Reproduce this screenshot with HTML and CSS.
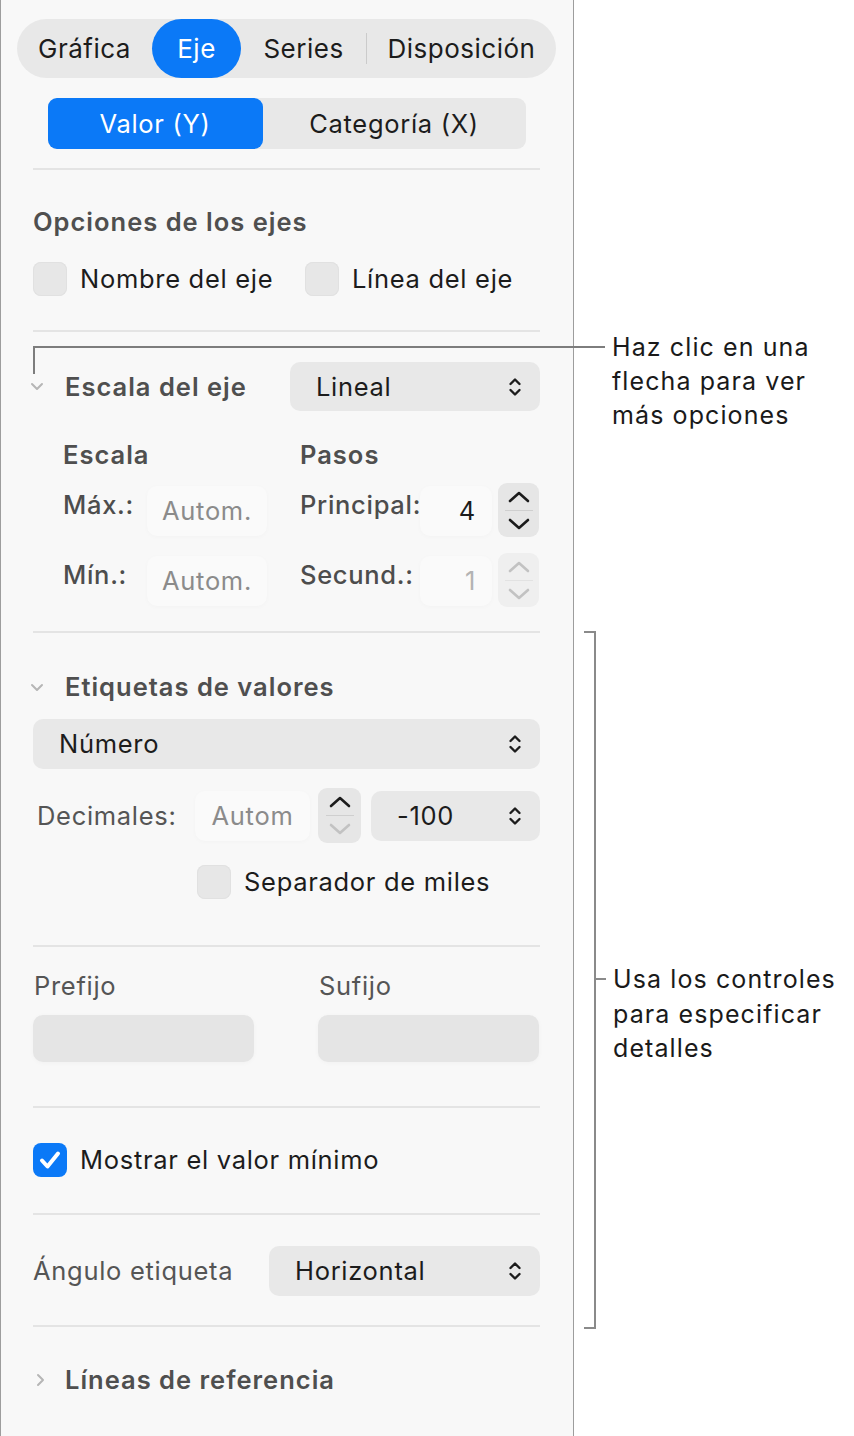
FILE: index.html
```html
<!DOCTYPE html>
<html lang="es">
  <head>
    <meta charset="UTF-8" />
    <meta name="viewport" content="width=device-width, initial-scale=1.0" />
    <title>Eje – Inspector de gráficas</title>
    <link rel="stylesheet" href="styles.css">
  </head>
  <body>
    <div class="page">
      <aside class="inspector">
        <!-- pestañas superiores del inspector -->
        <nav class="tabs">
          <span class="tab tab-chart">Gráfica</span>
          <span class="tab tab-axis is-active">Eje</span>
          <span class="tab tab-series">Series</span>
          <span class="tab-sep"></span>
          <span class="tab tab-layout">Disposición</span>
        </nav>

        <div class="content">
          <div class="segmented">
            <span class="seg is-active">Valor (Y)</span>
            <span class="seg">Categoría (X)</span>
          </div>

          <section class="group group-options">
            <h3 class="group-title">Opciones de los ejes</h3>
            <div class="check-row">
              <label class="check"><span class="box"></span>Nombre del eje</label>
              <label class="check"><span class="box"></span>Línea del eje</label>
            </div>
          </section>

          <section class="group group-scale">
            <div class="disclosure">
              <span class="twisty">
                <svg viewBox="0 0 14 9" width="14" height="9"><path d="M2 2 L7 7 L12 2" /></svg>
              </span>
              <h3 class="group-title">Escala del eje</h3>
              <div class="popup popup-scale">
                <span>Lineal</span>
                <svg class="updown" viewBox="0 0 14 22" width="14" height="22"><path d="M2.5 8 L7 3.5 L11.5 8 M2.5 14 L7 18.5 L11.5 14" /></svg>
              </div>
            </div>

            <div class="scale-head">
              <span class="scale-col">Escala</span>
              <span>Pasos</span>
            </div>
            <div class="scale-row">
              <span class="scale-label">Máx.:</span>
              <span class="field field-auto">Autom.</span>
              <span class="scale-label step-label">Principal:</span>
              <span class="field field-num">4</span>
              <span class="stepper">
                <svg class="arrow" viewBox="0 0 24 14" width="24" height="14"><path d="M3 11 L12 3 L21 11" /></svg>
                <span class="stepper-sep"></span>
                <svg class="arrow" viewBox="0 0 24 14" width="24" height="14"><path d="M3 3 L12 11 L21 3" /></svg>
              </span>
            </div>
            <div class="scale-row scale-row-min">
              <span class="scale-label">Mín.:</span>
              <span class="field field-auto">Autom.</span>
              <span class="scale-label step-label">Secund.:</span>
              <span class="field field-num is-dim">1</span>
              <span class="stepper is-disabled">
                <svg class="arrow" viewBox="0 0 24 14" width="24" height="14"><path d="M3 11 L12 3 L21 11" /></svg>
                <span class="stepper-sep"></span>
                <svg class="arrow" viewBox="0 0 24 14" width="24" height="14"><path d="M3 3 L12 11 L21 3" /></svg>
              </span>
            </div>
          </section>

          <section class="group group-labels">
            <div class="disclosure">
              <span class="twisty">
                <svg viewBox="0 0 14 9" width="14" height="9"><path d="M2 2 L7 7 L12 2" /></svg>
              </span>
              <h3 class="group-title">Etiquetas de valores</h3>
            </div>
            <div class="popup popup-format">
              <span>Número</span>
              <svg class="updown" viewBox="0 0 14 22" width="14" height="22"><path d="M2.5 8 L7 3.5 L11.5 8 M2.5 14 L7 18.5 L11.5 14" /></svg>
            </div>
            <div class="decimal-row">
              <span class="plain-label decimal-label">Decimales:</span>
              <span class="field field-decimal">Autom</span>
              <span class="stepper stepper-tall">
                <svg class="arrow" viewBox="0 0 24 14" width="24" height="14"><path d="M3 11 L12 3 L21 11" /></svg>
                <span class="stepper-sep"></span>
                <svg class="arrow is-off" viewBox="0 0 24 14" width="24" height="14"><path d="M3 3 L12 11 L21 3" /></svg>
              </span>
              <div class="popup popup-neg">
                <span>-100</span>
                <svg class="updown" viewBox="0 0 14 22" width="14" height="22"><path d="M2.5 8 L7 3.5 L11.5 8 M2.5 14 L7 18.5 L11.5 14" /></svg>
              </div>
            </div>
            <label class="check check-thousands"><span class="box"></span>Separador de miles</label>
          </section>

          <section class="group group-affix">
            <div class="affix">
              <span class="plain-label">Prefijo</span>
              <span class="text-box"></span>
            </div>
            <div class="affix">
              <span class="plain-label">Sufijo</span>
              <span class="text-box"></span>
            </div>
          </section>

          <section class="group group-min">
            <label class="check">
              <span class="box is-checked">
                <svg viewBox="0 0 34 34" width="34" height="34"><path d="M9 17.5 L14.5 23.5 L25 10.5" /></svg>
              </span>Mostrar el valor mínimo
            </label>
          </section>

          <section class="group group-angle">
            <span class="plain-label">Ángulo etiqueta</span>
            <div class="popup popup-angle">
              <span>Horizontal</span>
              <svg class="updown" viewBox="0 0 14 22" width="14" height="22"><path d="M2.5 8 L7 3.5 L11.5 8 M2.5 14 L7 18.5 L11.5 14" /></svg>
            </div>
          </section>

          <section class="group group-ref">
            <div class="disclosure">
              <span class="twisty">
                <svg viewBox="0 0 9 14" width="9" height="14"><path d="M2 2 L7 7 L2 12" /></svg>
              </span>
              <h3 class="group-title">Líneas de referencia</h3>
            </div>
          </section>
        </div>
      </aside>

      <!-- notas con sus líneas guía -->
      <span class="leader leader-h"></span>
      <span class="leader leader-v"></span>
      <p class="note note-arrow">Haz clic en una<br>flecha para ver<br>más opciones</p>

      <span class="bracket"></span>
      <span class="bracket-tick"></span>
      <p class="note note-controls">Usa los controles<br>para especificar<br>detalles</p>
    </div>
  </body>
</html>
```

FILE: styles.css
```css
html {
  background: #fff;
}
body {
  margin: 0;
  font-family: Inter, "Noto Sans", sans-serif;
  font-size: 25.5px;
  letter-spacing: 0.7px;
  line-height: 30px;
  color: #1c1c1c;
}
.page {
  position: relative;
  width: 854px;
  height: 1436px;
}

/* panel */
.inspector {
  width: 572px;
  background: #f8f8f8;
  border: 1px solid #9d9d9d;
  border-top: 0;
  padding: 19px 0 38px;
}
.tabs {
  display: flex;
  align-items: center;
  height: 59px;
  margin: 0 17px 0 16px;
  background: #e8e8e8;
  border-radius: 30px;
  font-size: 26px;
  letter-spacing: 0.5px;
}
.tab {
  display: flex;
  align-items: center;
  justify-content: center;
  height: 100%;
  border-radius: 30px;
}
.tab-chart { width: 135px; }
.tab-axis { width: 89px; }
.tab-series { width: 125px; }
.tab-layout { flex: 1; }
.tab.is-active {
  background: #0b79f7;
  color: #fff;
}
.tab-sep {
  width: 1px;
  height: 31px;
  background: #cbcbcb;
}

.content {
  padding: 0 33px 0 32px;
}
.segmented {
  display: flex;
  width: 478px;
  height: 51px;
  margin: 20px auto 19px;
  background: #e8e8e8;
  border-radius: 9px;
}
.seg {
  flex: 1;
  display: flex;
  align-items: center;
  justify-content: center;
  border-radius: 9px;
}
.seg.is-active {
  flex: 0 0 215px;
  background: #0b79f7;
  color: #fff;
}

/* secciones */
.group {
  border-top: 2px solid #e4e4e4;
}
.group-title {
  margin: 0;
  font-size: 25.5px;
  font-weight: 600;
  letter-spacing: 1px;
  color: #4f4f4f;
}
.plain-label {
  color: #555;
}

.group-options { padding: 37px 0 34px; }
.check-row {
  display: grid;
  grid-template-columns: 272px auto;
  margin-top: 25px;
}
.check {
  display: flex;
  align-items: center;
  gap: 13px;
}
.box {
  flex: none;
  width: 34px;
  height: 34px;
  border-radius: 8px;
  background: #e7e7e7;
  box-shadow: inset 0 0 0 1px #e1e1e1;
}
.box.is-checked {
  background: #0b79f7;
  box-shadow: none;
}
.box svg path {
  fill: none;
  stroke: #fff;
  stroke-width: 4;
  stroke-linecap: round;
  stroke-linejoin: round;
}

.disclosure {
  display: flex;
  align-items: center;
}
.twisty {
  flex: none;
  width: 32px;
  display: flex;
  align-items: center;
}
.twisty svg {
  margin-left: -3px;
}
.twisty path {
  fill: none;
  stroke: #b6b6b6;
  stroke-width: 2;
  stroke-linecap: round;
  stroke-linejoin: round;
}

.popup {
  display: flex;
  align-items: center;
  justify-content: space-between;
  height: 50px;
  padding: 0 18px 0 26px;
  box-sizing: border-box;
  background: #e8e8e8;
  border-radius: 10px;
}
.updown path {
  fill: none;
  stroke: #1c1c1c;
  stroke-width: 2.4;
  stroke-linecap: round;
  stroke-linejoin: round;
}

.group-scale { padding: 30px 0 24px; }
.popup-scale {
  width: 250px;
  height: 49px;
  margin-left: auto;
}
.scale-head {
  display: flex;
  margin-top: 29px;
  padding-left: 30px;
  font-weight: 600;
  letter-spacing: 1px;
  color: #4f4f4f;
}
.scale-col { width: 237px; }
.scale-row {
  display: flex;
  align-items: flex-start;
  height: 54px;
  margin-top: 13px;
  padding-left: 30px;
}
.scale-row-min { margin-top: 16px; }
.scale-label {
  width: 84px;
  margin-top: 7px;
  font-weight: 500;
  color: #4d4d4d;
}
.step-label {
  width: 120px;
  margin-left: 33px;
}
.field {
  display: flex;
  align-items: center;
  justify-content: center;
  height: 50px;
  margin-top: 3px;
  background: #fafafa;
  border-radius: 10px;
  box-shadow: 0 1px 5px rgba(0, 0, 0, 0.025);
  color: #8b8b8b;
}
.field-auto { width: 120px; }
.field-num {
  width: 72px;
  box-sizing: border-box;
  justify-content: flex-end;
  padding-right: 16px;
  color: #1c1c1c;
}
.field-num.is-dim { color: #b3b3b3; }

.stepper {
  flex: none;
  display: flex;
  flex-direction: column;
  align-items: center;
  justify-content: center;
  gap: 6px;
  width: 41px;
  height: 54px;
  margin-left: 6px;
  background: #e6e6e6;
  border-radius: 9px;
}
.stepper-sep {
  width: 28px;
  height: 1px;
  background: #cfcfcf;
}
.arrow path {
  fill: none;
  stroke: #1c1c1c;
  stroke-width: 2.6;
  stroke-linecap: round;
  stroke-linejoin: round;
}
.stepper.is-disabled {
  background: #efefef;
}
.stepper.is-disabled .arrow path,
.arrow.is-off path {
  stroke: #c2c2c2;
}
.stepper.is-disabled .stepper-sep {
  background: #e2e2e2;
}

.group-labels { padding: 39px 0 46px; }
.popup-format { margin-top: 17px; }
.decimal-row {
  display: flex;
  align-items: center;
  height: 55px;
  margin-top: 19px;
}
.decimal-label {
  width: 158px;
  padding-left: 4px;
}
.field-decimal {
  width: 115px;
  margin-top: 0;
}
.stepper-tall {
  width: 43px;
  height: 55px;
  margin-left: 8px;
}
.popup-neg {
  flex: 1;
  margin-left: 10px;
}
.check-thousands {
  margin: 22px 0 0 164px;
}

.group-affix {
  display: grid;
  grid-template-columns: 221px 221px;
  column-gap: 64px;
  padding: 24px 0 44px;
}
.affix {
  display: flex;
  flex-direction: column;
  gap: 14px;
}
.affix .plain-label { padding-left: 1px; }
.text-box {
  height: 47px;
  background: #e5e5e5;
  border-radius: 10px;
  box-shadow: 0 1px 5px rgba(0, 0, 0, 0.03);
}

.group-min { padding: 35px 0 36px; }

.group-angle {
  display: flex;
  align-items: center;
  justify-content: space-between;
  padding: 31px 0 29px;
}
.popup-angle { width: 271px; }

.group-ref { padding: 38px 0 38px; }
.group-ref .twisty svg { margin-left: 3px; }

/* notas y líneas guía */
.note {
  position: absolute;
  margin: 0;
  font-size: 25px;
  letter-spacing: 1.1px;
  line-height: 34px;
  color: #1a1a1a;
}
.note-arrow { left: 612px; top: 330px; }
.note-controls { left: 613px; top: 962px; line-height: 34.5px; }
.leader {
  position: absolute;
  background: #7d7d7d;
}
.leader-h { left: 33px; top: 346px; width: 572px; height: 2px; }
.leader-v { left: 33px; top: 346px; width: 2px; height: 28px; }
.bracket {
  position: absolute;
  left: 584px;
  top: 631px;
  width: 10px;
  height: 694px;
  border: 2px solid #8a8a8a;
  border-left: 0;
}
.bracket-tick {
  position: absolute;
  left: 596px;
  top: 978px;
  width: 10px;
  height: 2px;
  background: #8a8a8a;
}
```
